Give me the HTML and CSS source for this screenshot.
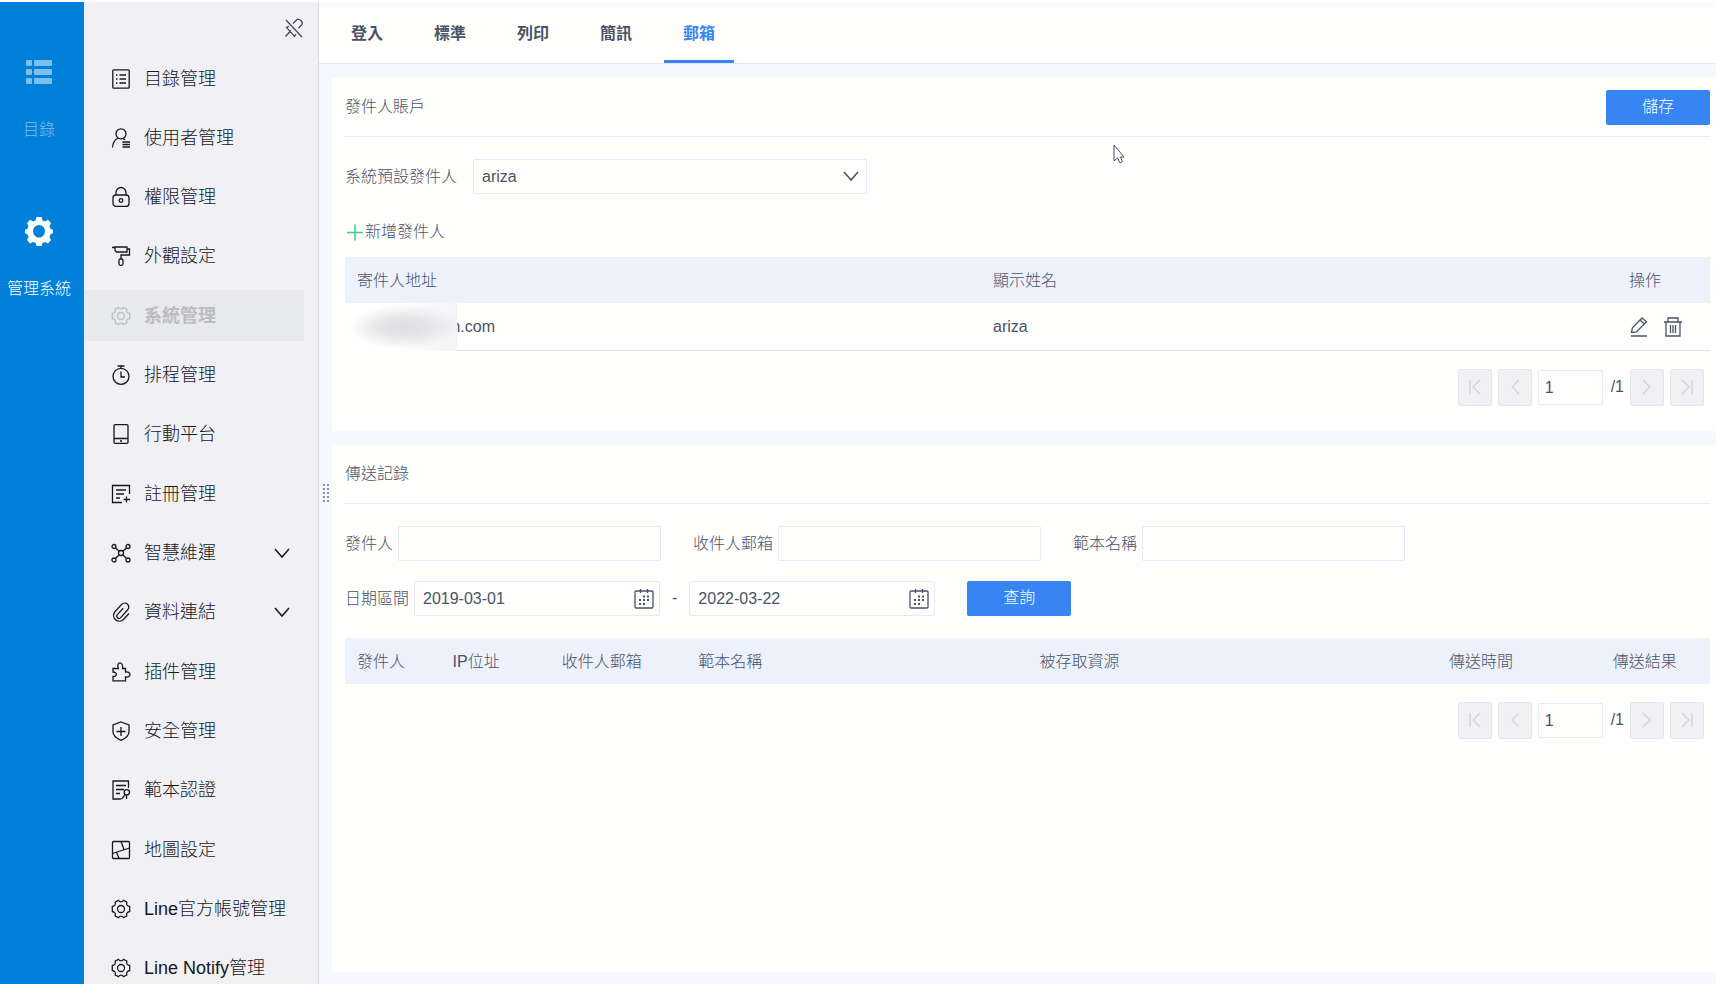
FILE: index.html
```html
<!DOCTYPE html>
<html lang="zh-Hant">
<head>
    <meta charset="UTF-8">
    <meta name="viewport" content="width=device-width, initial-scale=1.0">
    <title>管理系統</title>
    <link rel="stylesheet" href="styles.css">
</head>
<body>
    <!-- icons -->
    <svg class="sprite" aria-hidden="true">
        <symbol id="i-list" viewBox="0 0 20 20"><rect x="1.8" y="0.8" width="16.4" height="18.4" rx="1"/><path d="M5 6h1.5M5 10h1.5M5 14h1.5M8.5 6H15M8.5 10H15M8.5 14H15"/></symbol>
        <symbol id="i-user" viewBox="0 0 20 20"><circle cx="10" cy="5.8" r="5"/><path d="M7 10C3.5 12 1.8 15 1.5 19.5M12 10.4l2 1.4M11.5 14H19M11.5 16.5H19M11.5 19H19"/></symbol>
        <symbol id="i-lock" viewBox="0 0 20 20"><rect x="2" y="8" width="16" height="11.4" rx="3"/><path d="M5 8V5.5a5 5 0 0 1 10 0V8"/><circle cx="10" cy="13.5" r="1.8"/></symbol>
        <symbol id="i-roller" viewBox="0 0 20 20"><path d="M1 1.500h3M4 1h12v5H5.500L4 4.500zM16 3h2.500v6H10v4"/><rect x="8" y="13" width="4" height="6.300" rx="1.500"/></symbol>
        <symbol id="i-gear" viewBox="0 0 20 20"><path d="M7.500 1.300C9 3.300 11 3.300 12.500 1.300L15.800 3C15.200 5.500 16 7 18.700 7.500V12.500C16 13 15.200 14.500 15.800 17L12.500 18.700C11 16.700 9 16.700 7.500 18.700L4.200 17C4.800 14.500 4 13 1.300 12.500V7.500C4 7 4.800 5.500 4.200 3Z"/><circle cx="10" cy="10" r="3.500"/></symbol>
        <symbol id="i-timer" viewBox="0 0 20 20"><circle cx="10" cy="11.300" r="8"/><path d="M6.500 1h7M10 1v2.300M10 6.500v5.500h4"/></symbol>
        <symbol id="i-phone" viewBox="0 0 20 20"><rect x="3" y="0.700" width="14" height="18.600" rx="1"/><path d="M3 14.500h14M9 17h2"/></symbol>
        <symbol id="i-register" viewBox="0 0 20 20"><path d="M18.500 10V1.500h-17v17H11M5 6h10M5 10h8M5 14h4M15.500 12.500v6M12.500 15.500h6.500"/></symbol>
        <symbol id="i-nodes" viewBox="0 0 20 20"><circle cx="3" cy="3.500" r="2"/><circle cx="17" cy="3.500" r="2"/><circle cx="3" cy="17" r="2"/><circle cx="17" cy="17" r="2"/><circle cx="10" cy="10" r="2.500"/><path d="M4.500 5l3.700 3.300M15.500 5l-3.700 3.300M4.500 15.500l3.700-3.800M15.500 15.500l-3.700-3.800"/></symbol>
        <symbol id="i-clip" viewBox="0 0 20 20"><path d="M18 11.500l-5.500 6a5.800 5.800 0 0 1-8.800-7.500l7-7.600a4 4 0 0 1 6 5.400l-7 7.800a2.200 2.200 0 0 1-3.300-3l5.800-6.400"/></symbol>
        <symbol id="i-plugin" viewBox="0 0 20 20"><path d="M2 18.800V14.500C6.500 14.800 6.500 10 2 10V6.500H7.300C4.600 -1 13 -1 11.500 6.500H14.500V10C20.500 9 20.500 16 14.500 15V18.800Z"/></symbol>
        <symbol id="i-shield" viewBox="0 0 20 20"><path d="M10 1l8 3v7c0 4-4 6.500-8 8.300C6 17.500 2 15 2 11V4zM10 6v9M5.500 10.500h9"/></symbol>
        <symbol id="i-verify" viewBox="0 0 20 20"><path d="M17.500 8V1H2v18h8M5 5.500h10M5 9.500h8M5 13.500h4M14 14.800L10.500 19M15.500 15.500V19"/><circle cx="15.800" cy="12.300" r="2.700"/></symbol>
        <symbol id="i-map" viewBox="0 0 20 20"><rect x="1.500" y="1.500" width="17" height="17" rx="1"/><path d="M1.500 13.500l17-5.500M10 1.500l3 8M5.500 12.300l2.500 6"/></symbol>
        <symbol id="i-down" viewBox="0 0 16 16"><path d="M1 4l7 8 7-8"/></symbol>
        <symbol id="i-pin" viewBox="0 0 20 20"><path d="M2 2l16 17M1.500 18.500l5.500-6M9 5.500l4-4c2-1.500 6.500 2.500 5 5l-3.500 3.800M5 8L2.500 9.500l8 9L12 16"/></symbol>
        <symbol id="i-calendar" viewBox="0 0 20 20"><rect x="1" y="2" width="18" height="17" rx="1"/><path d="M6.500 0v4M13.500 0v4"/><path class="dots" d="M9 7.500h2M13 7.500h2M5 11h2M9 11h2M13 11h2M5 15h2M9 15h2"/></symbol>
        <symbol id="i-edit" viewBox="0 0 20 20"><path d="M2.500 15.500l.8-4.500L13 1l4.500 3.800L7.500 15zM11 3l4.500 4M2 19h16"/></symbol>
        <symbol id="i-trash" viewBox="0 0 20 20"><path d="M1 5h18M5 5V1h10v4M3 5v14h14V5M7.500 8v8M10 8v8M12.500 8v8"/></symbol>
        <symbol id="i-first" viewBox="0 0 16 16"><path d="M3 1v14M13 1L6 8l7 7"/></symbol>
        <symbol id="i-prev" viewBox="0 0 16 16"><path d="M12 1L5 8l7 7"/></symbol>
        <symbol id="i-next" viewBox="0 0 16 16"><path d="M4 1l7 7-7 7"/></symbol>
        <symbol id="i-last" viewBox="0 0 16 16"><path d="M13 1v14M3 1l7 7-7 7"/></symbol>
    </svg>

    <div class="app">
        <nav class="rail">
            <a href="#" class="rail-item muted">
                <svg class="rail-icon" viewBox="0 0 28 28" fill="currentColor"><rect x="1" y="2" width="6" height="6" rx="1"/><rect x="9" y="2" width="18" height="6" rx="1"/><rect x="1" y="11" width="6" height="6" rx="1"/><rect x="9" y="11" width="18" height="6" rx="1"/><rect x="1" y="20" width="6" height="6" rx="1"/><rect x="9" y="20" width="18" height="6" rx="1"/></svg>
                <span>目錄</span>
            </a>
            <a href="#" class="rail-item">
                <svg class="rail-icon" viewBox="0 0 28 28"><path fill="currentColor" fill-rule="evenodd" d="M11.500 0h5l1 3.500 2.500 1 3-1.800 3 3.500-1.500 3 1 2.600 2.500 1v3.500l-2.500 1-1 2.600 1.500 3-3 3.500-3-1.500-2.500 1-1 3.100h-5l-1-3.100-2.500-1-3 1.500-3-3.500 1.500-3-1-2.600-2.500-1v-3.500l2.500-1 1-2.600-1.500-3 3-3.500 3 1.800 2.500-1zM14 8a6 6.300 0 1 0 0 12.600A6 6.300 0 1 0 14 8z"/></svg>
                <span>管理系統</span>
            </a>
        </nav>

        <aside class="sidebar">
            <button type="button" class="pin" aria-label="取消固定"><svg class="icon"><use href="#i-pin"/></svg></button>
            <ul class="menu">
                <li><a href="#"><svg class="icon"><use href="#i-list"/></svg>目錄管理</a></li>
                <li><a href="#"><svg class="icon"><use href="#i-user"/></svg>使用者管理</a></li>
                <li><a href="#"><svg class="icon"><use href="#i-lock"/></svg>權限管理</a></li>
                <li><a href="#"><svg class="icon"><use href="#i-roller"/></svg>外觀設定</a></li>
                <li><a href="#" class="active"><svg class="icon"><use href="#i-gear"/></svg>系統管理</a></li>
                <li><a href="#"><svg class="icon"><use href="#i-timer"/></svg>排程管理</a></li>
                <li><a href="#"><svg class="icon"><use href="#i-phone"/></svg>行動平台</a></li>
                <li><a href="#"><svg class="icon"><use href="#i-register"/></svg>註冊管理</a></li>
                <li><a href="#"><svg class="icon"><use href="#i-nodes"/></svg>智慧維運<svg class="arrow"><use href="#i-down"/></svg></a></li>
                <li><a href="#"><svg class="icon"><use href="#i-clip"/></svg>資料連結<svg class="arrow"><use href="#i-down"/></svg></a></li>
                <li><a href="#"><svg class="icon"><use href="#i-plugin"/></svg>插件管理</a></li>
                <li><a href="#"><svg class="icon"><use href="#i-shield"/></svg>安全管理</a></li>
                <li><a href="#"><svg class="icon"><use href="#i-verify"/></svg>範本認證</a></li>
                <li><a href="#"><svg class="icon"><use href="#i-map"/></svg>地圖設定</a></li>
                <li><a href="#"><svg class="icon"><use href="#i-gear"/></svg>Line官方帳號管理</a></li>
                <li><a href="#"><svg class="icon"><use href="#i-gear"/></svg>Line Notify管理</a></li>
            </ul>
        </aside>

        <main class="main">
            <nav class="tabs">
                <a href="#">登入</a>
                <a href="#">標準</a>
                <a href="#">列印</a>
                <a href="#">簡訊</a>
                <a href="#" class="active">郵箱</a>
            </nav>
            <div class="handle"></div>

            <div class="content">
                <section class="panel">
                    <header class="panel-head">
                        <h2>發件人賬戶</h2>
                        <button type="button" class="primary">儲存</button>
                    </header>
                    <div class="default-sender">
                        <label for="default-sender">系統預設發件人</label>
                        <div class="select-box">
                            <select id="default-sender">
                                <option>ariza</option>
                            </select>
                            <svg class="arrow"><use href="#i-down"/></svg>
                        </div>
                    </div>
                    <button type="button" class="add">
                        <svg class="plus" viewBox="0 0 16 16"><path d="M8 0v16M0 8h16"/></svg>新增發件人
                    </button>
                    <table>
                        <thead>
                            <tr>
                                <th>寄件人地址</th>
                                <th>顯示姓名</th>
                                <th class="col-actions">操作</th>
                            </tr>
                        </thead>
                        <tbody>
                            <tr>
                                <td class="address"><span class="mask"></span>m.com</td>
                                <td>ariza</td>
                                <td>
                                    <div class="actions">
                                        <button type="button" aria-label="編輯"><svg class="icon"><use href="#i-edit"/></svg></button>
                                        <button type="button" aria-label="刪除"><svg class="icon"><use href="#i-trash"/></svg></button>
                                    </div>
                                </td>
                            </tr>
                        </tbody>
                    </table>
                    <div class="pager">
                        <button type="button" disabled aria-label="第一頁"><svg><use href="#i-first"/></svg></button>
                        <button type="button" disabled aria-label="上一頁"><svg><use href="#i-prev"/></svg></button>
                        <input type="text" value="1" aria-label="頁碼">
                        <span>/1</span>
                        <button type="button" disabled aria-label="下一頁"><svg><use href="#i-next"/></svg></button>
                        <button type="button" disabled aria-label="最後一頁"><svg><use href="#i-last"/></svg></button>
                    </div>
                </section>

                <section class="panel records">
                    <header class="panel-head">
                        <h2>傳送記錄</h2>
                    </header>
                    <form class="filters">
                        <div class="filter-row">
                            <div class="field">
                                <label for="sender">發件人</label>
                                <input type="text" id="sender">
                            </div>
                            <div class="field">
                                <label for="receiver">收件人郵箱</label>
                                <input type="text" id="receiver">
                            </div>
                            <div class="field">
                                <label for="template">範本名稱</label>
                                <input type="text" id="template">
                            </div>
                        </div>
                        <div class="filter-row">
                            <div class="field">
                                <label for="date-from">日期區間</label>
                                <div class="date-box">
                                    <input type="text" id="date-from" value="2019-03-01">
                                    <svg class="icon"><use href="#i-calendar"/></svg>
                                </div>
                                <span class="dash">-</span>
                                <div class="date-box">
                                    <input type="text" value="2022-03-22" aria-label="結束日期">
                                    <svg class="icon"><use href="#i-calendar"/></svg>
                                </div>
                            </div>
                            <button type="button" class="primary">查詢</button>
                        </div>
                    </form>
                    <table>
                        <colgroup>
                            <col class="w7"><col class="w8"><col class="w10"><col class="w25"><col class="w30"><col class="w12"><col class="w8">
                        </colgroup>
                        <thead>
                            <tr>
                                <th>發件人</th>
                                <th>IP位址</th>
                                <th>收件人郵箱</th>
                                <th>範本名稱</th>
                                <th>被存取資源</th>
                                <th>傳送時間</th>
                                <th>傳送結果</th>
                            </tr>
                        </thead>
                    </table>
                    <div class="pager">
                        <button type="button" disabled aria-label="第一頁"><svg><use href="#i-first"/></svg></button>
                        <button type="button" disabled aria-label="上一頁"><svg><use href="#i-prev"/></svg></button>
                        <input type="text" value="1" aria-label="頁碼">
                        <span>/1</span>
                        <button type="button" disabled aria-label="下一頁"><svg><use href="#i-next"/></svg></button>
                        <button type="button" disabled aria-label="最後一頁"><svg><use href="#i-last"/></svg></button>
                    </div>
                </section>
            </div>
        </main>
    </div>

    <svg class="cursor" viewBox="0 0 12 20"><path d="M1 1v16l3.500-3 2.500 5 2.500-1.500L7.500 13H11z"/></svg>
</body>
</html>
```
FILE: styles.css
```css
* {
    box-sizing: border-box;
}
body {
    margin: 0;
    background: #fefefd;
    color: #4a5365;
    font-family: "Liberation Sans", "Noto Sans CJK TC", sans-serif;
    font-size: 16px;
    font-weight: 300;
    line-height: 24px;
}
a {
    color: inherit;
    text-decoration: none;
}
button,
input,
select {
    margin: 0;
    font: inherit;
    color: inherit;
}
button {
    padding: 0;
    border: none;
    background: none;
    cursor: pointer;
}
svg {
    display: block;
    flex: none;
}
symbol,
.plus,
.arrow {
    fill: none;
    stroke: currentColor;
}
.sprite {
    position: absolute;
    width: 0;
    height: 0;
}
.icon {
    width: 20px;
    height: 22px;
    stroke-width: 1.3;
}
.arrow {
    width: 16px;
    height: 16px;
    stroke-width: 1.5;
}
.app {
    display: flex;
    height: 100vh;
    padding-top: 2px;
    overflow: hidden;
}

/* left rail */
.rail {
    display: flex;
    flex-direction: column;
    gap: 74px;
    width: 84px;
    padding: 55px 6px 0 0;
    background: #0080d8;
    color: #fff;
}
.rail-item {
    display: flex;
    flex-direction: column;
    align-items: center;
    gap: 31px;
    white-space: nowrap;
}
.rail-item.muted {
    color: #7fbfeb;
}
.rail-icon {
    width: 28px;
    height: 30px;
}

/* sidebar */
.sidebar {
    display: flex;
    flex-direction: column;
    width: 235px;
    border-right: 1px solid #d9dce2;
    background: #f1f1f5;
    color: #16181d;
}
.pin {
    align-self: flex-end;
    margin: 15px 14px 14px;
    color: #464b57;
}
.menu {
    display: flex;
    flex: 1;
    flex-direction: column;
    justify-content: space-between;
    margin: 0 0 -10px;
    padding: 0;
    list-style: none;
}
.menu a {
    display: flex;
    align-items: center;
    gap: 13px;
    height: 51px;
    margin-right: 14px;
    padding-left: 27px;
    font-size: 18px;
}
.menu a.active {
    background: #e8e9eb;
    color: #bcbdc0;
    font-weight: bold;
}
.menu .arrow {
    margin: 0 14px 0 auto;
}

/* main */
.main {
    position: relative;
    display: flex;
    flex: 1;
    flex-direction: column;
    min-width: 0;
    background: #f5f9fd;
}
.tabs {
    display: flex;
    gap: 13px;
    height: 62px;
    padding-left: 13px;
    border-top: 5px solid #f9f9fc;
    border-bottom: 1px solid #e3e5ec;
    background: #fefefd;
}
.tabs a {
    width: 70px;
    padding-top: 15px;
    border-bottom: 3px solid transparent;
    font-weight: bold;
    text-align: center;
}
.tabs a.active {
    border-color: #3685f2;
    color: #3685f2;
}
.handle {
    position: absolute;
    top: 50%;
    left: 3px;
    width: 8px;
    height: 20px;
    background: radial-gradient(circle, #8b90a0 1px, transparent 1px) 0 0 / 4px 4px;
    transform: translateY(-50%);
}
.content {
    display: flex;
    flex: 1;
    flex-direction: column;
    gap: 14px;
    padding: 14px 0 12px 13px;
}
.panel {
    padding: 0 6px 25px 13px;
    background: #fefefd;
}
.records {
    flex: 1;
}
.panel-head {
    display: flex;
    align-items: center;
    justify-content: space-between;
    height: 59px;
    border-bottom: 1px solid #ececf2;
}
.panel-head h2 {
    margin: 0;
    font-size: 16px;
    font-weight: inherit;
}
.primary {
    width: 104px;
    height: 35px;
    border-radius: 2px;
    background: #3685f2;
    color: #fff;
}
input,
select {
    height: 35px;
    padding: 1px 8px 0;
    border: 1px solid #e8e9f2;
    border-radius: 2px;
    background: #fefefd;
}

.default-sender {
    display: flex;
    align-items: center;
    gap: 16px;
    padding: 22px 0;
}
.select-box {
    position: relative;
    width: 394px;
}
.select-box select {
    width: 100%;
    padding-top: 0;
    appearance: none;
}
.select-box .arrow {
    position: absolute;
    top: 9px;
    right: 8px;
    pointer-events: none;
}
.add {
    display: flex;
    align-items: center;
    gap: 2px;
    margin: 4px 0 13px 2px;
}
.plus {
    width: 16px;
    height: 17px;
    stroke: #3fc98a;
    stroke-width: 1.5;
}

table {
    width: 100%;
    border-collapse: collapse;
    table-layout: fixed;
}
th,
td {
    height: 46px;
    padding: 2px 12px 0;
    font-weight: inherit;
    text-align: left;
}
th {
    background: #ecf1fc;
}
td {
    height: 47px;
    border-bottom: 1px solid #dfe4ea;
}
.col-actions {
    width: 93px;
}
.w7 { width: 7%; }
.w8 { width: 8%; }
.w10 { width: 10%; }
.w12 { width: 12%; }
.w25 { width: 25%; }
.w30 { width: 30%; }

.address {
    position: relative;
    padding-left: 102px;
}
/* hides the account part of the address */
.mask {
    position: absolute;
    top: 0;
    left: 0;
    width: 112px;
    height: 48px;
    background: radial-gradient(ellipse 56px 22px at 60px 24px, #dcdfdf, #e4e4e7 40%, transparent), linear-gradient(90deg, transparent 50%, #f4f4f8) #fefefd;
}
.actions {
    display: flex;
    gap: 14px;
}

.pager {
    display: flex;
    align-items: center;
    justify-content: flex-end;
    gap: 6px;
    padding: 18px 6px 0 0;
}
.pager button {
    display: grid;
    place-items: center;
    width: 34px;
    height: 37px;
    border: 1px solid #e6e6ee;
    border-radius: 2px;
    background: #f1f1f4;
    color: #cfd3dc;
}
.pager button svg {
    width: 16px;
    height: 16px;
    stroke-width: 1.3;
}
.pager input {
    width: 65px;
    padding-left: 6px;
}
.pager span {
    padding-left: 2px;
}

.filters {
    display: flex;
    flex-direction: column;
    gap: 20px;
    padding: 22px 0;
}
.filter-row {
    display: flex;
    gap: 32px;
}
.field {
    display: flex;
    align-items: center;
    gap: 5px;
}
.field label {
    padding-top: 2px;
}
.field > input {
    width: 263px;
}
.date-box {
    position: relative;
}
.date-box input {
    width: 246px;
    padding-top: 2px;
}
.date-box .icon {
    position: absolute;
    top: 7px;
    right: 6px;
}
.dots {
    stroke-width: 2;
}
.dash {
    padding: 0 7px;
}

.cursor {
    position: absolute;
    top: 143px;
    left: 1113px;
    width: 12px;
    height: 22px;
    fill: #fff;
    stroke: #454e60;
    pointer-events: none;
}
```
